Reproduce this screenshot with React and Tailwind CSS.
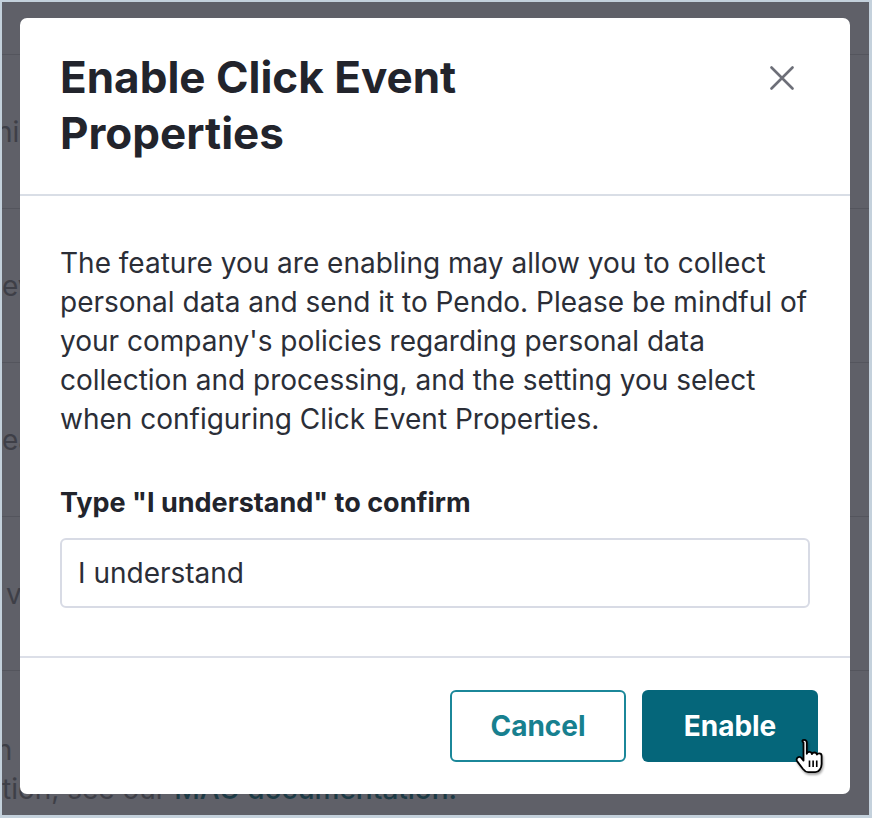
import React from "react";

const HandCursor = () => (
  <svg
    className="absolute left-[792px] top-[736px] drop-shadow-[1px_2px_1px_rgba(0,0,0,0.35)]"
    width="31"
    height="38"
    viewBox="0 0 17 21"
  >
    <path
      d="M5.5 1c.8 0 1.5.7 1.5 1.5v6.2c.2-.6.8-1 1.4-1 .7 0 1.3.5 1.4 1.2.2-.5.8-.9 1.4-.9.7 0 1.3.5 1.4 1.2.2-.4.7-.7 1.2-.7.8 0 1.4.6 1.4 1.4v4.5c0 2.2-1.5 4.5-3.5 4.5h-4c-1.2 0-2-.8-2.8-1.8l-3.2-4.2c-.5-.7-.4-1.6.3-2.1.7-.5 1.6-.3 2.1.3l1.1 1.4V2.5C4 1.7 4.7 1 5.5 1z"
      fill="#fff"
      stroke="#000"
      strokeWidth="1"
      strokeLinejoin="round"
    />
    <path d="M8.5 12.5v3.5M10.5 12.5v3.5M12.5 12.5v3.5" stroke="#000" strokeWidth="0.9" />
  </svg>
);

export default function App() {
  return (
    <div className="w-[872px] h-[818px] overflow-hidden border-t-2 border-l-2 border-r-[3px] border-b-[3px] border-[#c4d1dc]">
      <div className="relative h-full bg-[#5f6068] font-['Inter',sans-serif]">
        {/* page behind the overlay */}
        <div className="flex flex-col text-[28px] text-[#3e3f47]">
          <div className="h-[53px] border-b border-[#54555d]" />
          <div className="h-[154px] flex items-center border-b border-[#54555d]">
            <span className="-ml-[6px] whitespace-nowrap">high</span>
          </div>
          <div className="h-[154px] flex items-center border-b border-[#54555d]">
            <span className="whitespace-nowrap">event</span>
          </div>
          <div className="h-[154px] flex items-center border-b border-[#54555d]">
            <span className="whitespace-nowrap">each</span>
          </div>
          <div className="h-[154px] flex items-center border-b border-[#54555d]">
            <span className="ml-[4px] whitespace-nowrap">view</span>
          </div>
          <div className="pt-[60px] leading-[39px]">
            <div className="-ml-[13px] whitespace-nowrap">in compliance</div>
            <div className="whitespace-nowrap">
              tion, see our{" "}
              <span className="font-medium text-[#1d3a45]">MAU documentation.</span>
            </div>
          </div>
        </div>

        {/* modal */}
        <div className="absolute left-[18px] top-[16px] w-[830px] bg-white rounded-[7px]">
          <div className="flex items-start justify-between px-10 pt-[31px] pb-[33px] border-b-2 border-[#d9dee6]">
            <h2 className="max-w-[560px] text-[44px] leading-[56px] font-bold text-[#22242c]">
              Enable Click Event Properties
            </h2>
            <button className="mt-[17px] mr-[16px]">
              <svg width="24" height="24" viewBox="0 0 24 24">
                <path
                  d="M1.5 1.5l21 21M22.5 1.5l-21 21"
                  stroke="#6d6f78"
                  strokeWidth="2.6"
                  strokeLinecap="round"
                />
              </svg>
            </button>
          </div>

          <div className="px-10 pt-[48px] pb-[48px]">
            <p className="text-[28px] leading-[39px] text-[#2b2e37]">
              The feature you are enabling may allow you to collect personal data
              and send it to Pendo. Please be mindful of your company's policies
              regarding personal data collection and processing, and the setting
              you select when configuring Click Event Properties.
            </p>
            <label className="block mt-[46px] text-[27px] leading-[36px] font-bold text-[#22242c]">
              Type "I understand" to confirm
            </label>
            <input
              type="text"
              readOnly
              defaultValue="I understand"
              className="mt-[17px] w-full h-[70px] px-4 border-2 border-[#d8dbe5] rounded-[6px] text-[28px] text-[#2b2e37] outline-none"
            />
          </div>

          <div className="flex justify-end gap-4 px-8 py-8 border-t-2 border-[#dcdfe8]">
            <button className="w-[176px] h-[72px] rounded-[6px] border-2 border-[#1b8799] text-[28px] font-bold text-[#17808f]">
              Cancel
            </button>
            <button className="w-[176px] h-[72px] rounded-[6px] bg-[#05667a] text-[28px] font-bold text-white">
              Enable
            </button>
          </div>
        </div>

        <HandCursor />
      </div>
    </div>
  );
}
